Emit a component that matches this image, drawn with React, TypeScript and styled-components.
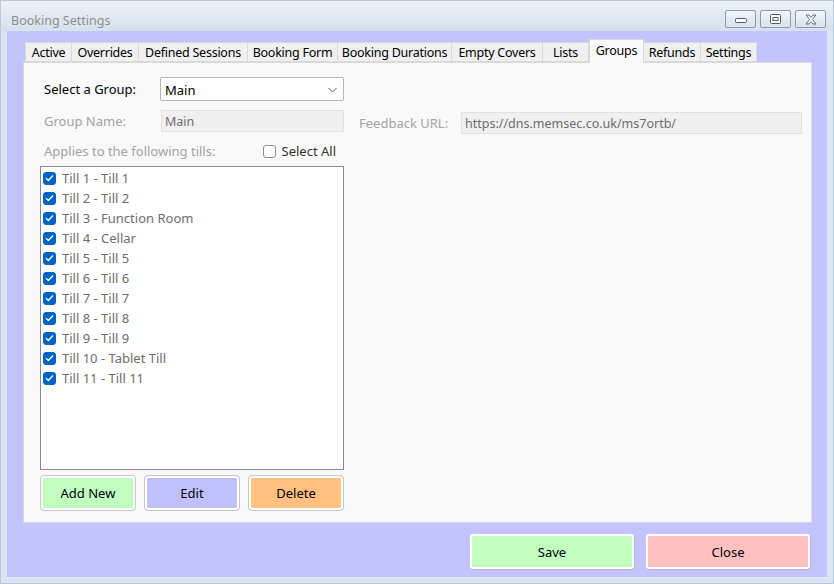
import React from 'react';
import styled, { createGlobalStyle } from 'styled-components';

const GlobalStyle = createGlobalStyle`
  html, body {
    margin: 0;
    padding: 0;
    background: #dae6f3;
  }
  * {
    box-sizing: border-box;
  }
  body {
    font-family: "Noto Sans", "Open Sans", sans-serif;
    font-size: 13px;
  }
`;

const tabs = [
  { label: 'Active', width: 47 },
  { label: 'Overrides', width: 67 },
  { label: 'Defined Sessions', width: 109 },
  { label: 'Booking Form', width: 90 },
  { label: 'Booking Durations', width: 114 },
  { label: 'Empty Covers', width: 91 },
  { label: 'Lists', width: 46 },
  { label: 'Groups', width: 55 },
  { label: 'Refunds', width: 57 },
  { label: 'Settings', width: 56 },
];

const tills = [
  'Till 1 - Till 1',
  'Till 2 - Till 2',
  'Till 3 - Function Room',
  'Till 4 - Cellar',
  'Till 5 - Till 5',
  'Till 6 - Till 6',
  'Till 7 - Till 7',
  'Till 8 - Till 8',
  'Till 9 - Till 9',
  'Till 10 - Tablet Till',
  'Till 11 - Till 11',
];

const Window = styled.div`
  width: 834px;
  height: 584px;
  display: flex;
  flex-direction: column;
  background: #dae6f3;
  border: 1px solid #b9c8d8;
`;

const TitleBar = styled.div`
  height: 30px;
  display: flex;
  align-items: center;
  justify-content: space-between;
  padding: 0 7px 0 10px;
  background: linear-gradient(#eef2f7, #d5e0ec);
`;

const Title = styled.span`
  color: #8f8f8f;
  font-size: 12.5px;
  margin-top: 8px;
`;

const WindowControls = styled.div`
  display: flex;
  gap: 4px;
  margin-top: 6px;
`;

const ControlButton = styled.div`
  width: 31px;
  height: 18px;
  border: 1px solid #8d9bb0;
  border-radius: 2px;
  background: linear-gradient(#f3f6fa, #d9e1eb);
  display: flex;
  align-items: center;
  justify-content: center;
`;

const Client = styled.div`
  flex: 1;
  margin: 0 6px 6px 6px;
  background: #c3c3fd;
  padding: 8px 15px 0 16px;
  display: flex;
  flex-direction: column;
`;

const TabStrip = styled.div`
  height: 23px;
  display: flex;
  align-items: flex-end;
  padding-left: 2px;
`;

const Tab = styled.div<{ $width: number; $active?: boolean }>`
  width: ${(p) => p.$width}px;
  height: ${(p) => (p.$active ? 24 : 20)}px;
  margin-bottom: ${(p) => (p.$active ? -1 : 0)}px;
  background: ${(p) => (p.$active ? '#f9f9f9' : '#f0f0f0')};
  border: 1px solid #d9d9d9;
  border-bottom: ${(p) => (p.$active ? 'none' : '1px solid #d9d9d9')};
  border-left: ${(p) => (p.$active ? '1px solid #d9d9d9' : 'none')};
  display: flex;
  align-items: ${(p) => (p.$active ? 'flex-start' : 'center')};
  padding-top: ${(p) => (p.$active ? 2 : 0)}px;
  justify-content: center;
  color: #000;
  font-size: 12.5px;
  letter-spacing: -0.25px;
  white-space: nowrap;
  position: relative;
  z-index: ${(p) => (p.$active ? 1 : 0)};

  &:first-child {
    border-left: 1px solid #d9d9d9;
  }
`;

const Panel = styled.div`
  width: 789px;
  height: 461px;
  background: #f9f9f9;
  border: 1px solid #dadada;
  display: flex;
  padding: 14px 0 0 16px;
  gap: 15px;
`;

const LeftColumn = styled.div`
  width: 304px;
  display: flex;
  flex-direction: column;
`;

const Row = styled.div<{ $height: number; $gap?: number }>`
  display: flex;
  align-items: center;
  height: ${(p) => p.$height}px;
  margin-bottom: ${(p) => p.$gap ?? 0}px;
  padding-left: 4px;
`;

const Label = styled.span<{ $muted?: boolean; $width?: number }>`
  width: ${(p) => (p.$width ? `${p.$width}px` : 'auto')};
  color: ${(p) => (p.$muted ? '#a3a3a3' : '#000')};
  font-size: 13px;
  white-space: nowrap;
`;

const Select = styled.div`
  width: 184px;
  height: 24px;
  background: #fff;
  border: 1px solid #b5b5b5;
  border-radius: 2px;
  display: flex;
  align-items: center;
  justify-content: space-between;
  padding: 1px 6px 0 4px;
  color: #000;
  font-size: 13px;
`;

const TextBox = styled.div<{ $width: number }>`
  width: ${(p) => p.$width}px;
  height: 22px;
  background: #f0f0f0;
  border: 1px solid #e2e2e2;
  display: flex;
  align-items: center;
  padding-left: 3px;
  color: #6d6d6d;
  font-size: 12.5px;
`;

const SelectAll = styled.label`
  margin-left: auto;
  margin-right: 8px;
  display: flex;
  align-items: center;
  gap: 6px;
  color: #333;
  font-size: 13px;
`;

const Box = styled.span<{ $checked?: boolean }>`
  width: 13px;
  height: 13px;
  border-radius: 3px;
  flex-shrink: 0;
  display: flex;
  align-items: center;
  justify-content: center;
  background: ${(p) => (p.$checked ? '#0063c6' : '#fff')};
  border: 1px solid ${(p) => (p.$checked ? '#0063c6' : '#8c8c8c')};
`;

const TillList = styled.div`
  height: 304px;
  background: #fff;
  border: 1px solid #858a92;
  padding: 1px 2px;
  margin-top: 5px;
`;

const TillRow = styled.div`
  height: 20px;
  display: flex;
  align-items: center;
  gap: 6px;
  color: #6d6d6d;
  font-size: 13px;
`;

const ButtonRow = styled.div`
  display: flex;
  justify-content: space-between;
  margin-top: 5px;
`;

const ActionButton = styled.div<{ $color: string }>`
  width: 96px;
  height: 36px;
  background: ${(p) => p.$color};
  border: 1px solid #c8c8c8;
  border-radius: 4px;
  box-shadow: inset 0 0 0 2px #fff;
  display: flex;
  align-items: center;
  justify-content: center;
  color: #000;
  font-size: 13px;
`;

const RightColumn = styled.div`
  flex: 1;
  padding-top: 35px;
`;

const FeedbackRow = styled.div`
  display: flex;
  align-items: center;
  height: 22px;
`;

const Footer = styled.div`
  display: flex;
  justify-content: flex-end;
  gap: 12px;
  margin-top: 11px;
  padding-right: 2px;
`;

const DialogButton = styled.div<{ $color: string }>`
  width: 164px;
  height: 35px;
  background: ${(p) => p.$color};
  border: 2px solid #fff;
  border-radius: 3px;
  box-shadow: 1px 1px 1px #b4b4c8;
  display: flex;
  align-items: center;
  justify-content: center;
  color: #000;
  font-size: 13px;
`;

const Check = () => (
  <svg width="9" height="8" viewBox="0 0 9 8">
    <path d="M1 4.2 L3.4 6.5 L8 1.5" fill="none" stroke="#fff" strokeWidth="1.3" />
  </svg>
);

const Chevron = () => (
  <svg width="9" height="6" viewBox="0 0 9 6">
    <path d="M0.5 1 L4.5 5 L8.5 1" fill="none" stroke="#555" strokeWidth="1" />
  </svg>
);

const MinimizeGlyph = () => (
  <svg width="12" height="8" viewBox="0 0 12 8">
    <rect x="0.5" y="3.5" width="11" height="4" rx="1" fill="#fff" stroke="#4f5a68" />
  </svg>
);

const RestoreGlyph = () => (
  <svg width="11" height="10" viewBox="0 0 11 10">
    <rect x="0.5" y="0.5" width="10" height="9" rx="1" fill="#fff" stroke="#4f5a68" />
    <rect x="3" y="3.5" width="5" height="3" fill="none" stroke="#4f5a68" />
  </svg>
);

const CloseGlyph = () => (
  <svg width="12" height="11" viewBox="0 0 12 11">
    <path
      d="M1 1 L4 1 L6 3.5 L8 1 L11 1 L7.5 5.5 L11 10 L8 10 L6 7.5 L4 10 L1 10 L4.5 5.5 Z"
      fill="#fff"
      stroke="#4f5a68"
      strokeWidth="0.9"
    />
  </svg>
);

export default function App() {
  return (
    <>
      <GlobalStyle />
      <Window>
        <TitleBar>
          <Title>Booking Settings</Title>
          <WindowControls>
            <ControlButton>
              <MinimizeGlyph />
            </ControlButton>
            <ControlButton>
              <RestoreGlyph />
            </ControlButton>
            <ControlButton>
              <CloseGlyph />
            </ControlButton>
          </WindowControls>
        </TitleBar>

        <Client>
          <TabStrip>
            {tabs.map((t) => (
              <Tab key={t.label} $width={t.width} $active={t.label === 'Groups'}>
                {t.label}
              </Tab>
            ))}
          </TabStrip>

          <Panel>
            <LeftColumn>
              <Row $height={24} $gap={9}>
                <Label $width={116}>Select a Group:</Label>
                <Select>
                  <span>Main</span>
                  <Chevron />
                </Select>
              </Row>
              <Row $height={22} $gap={9}>
                <Label $width={117} $muted>
                  Group Name:
                </Label>
                <TextBox $width={183}>Main</TextBox>
              </Row>
              <Row $height={20}>
                <Label $muted>Applies to the following tills:</Label>
                <SelectAll>
                  <Box />
                  Select All
                </SelectAll>
              </Row>
              <TillList>
                {tills.map((till) => (
                  <TillRow key={till}>
                    <Box $checked>
                      <Check />
                    </Box>
                    {till}
                  </TillRow>
                ))}
              </TillList>
              <ButtonRow>
                <ActionButton $color="#c0ffc0">Add New</ActionButton>
                <ActionButton $color="#c0c0ff">Edit</ActionButton>
                <ActionButton $color="#ffc080">Delete</ActionButton>
              </ButtonRow>
            </LeftColumn>

            <RightColumn>
              <FeedbackRow>
                <Label $width={102} $muted>
                  Feedback URL:
                </Label>
                <TextBox $width={341}>https://dns.memsec.co.uk/ms7ortb/</TextBox>
              </FeedbackRow>
            </RightColumn>
          </Panel>

          <Footer>
            <DialogButton $color="#c0ffc0">Save</DialogButton>
            <DialogButton $color="#ffc0c0">Close</DialogButton>
          </Footer>
        </Client>
      </Window>
    </>
  );
}
